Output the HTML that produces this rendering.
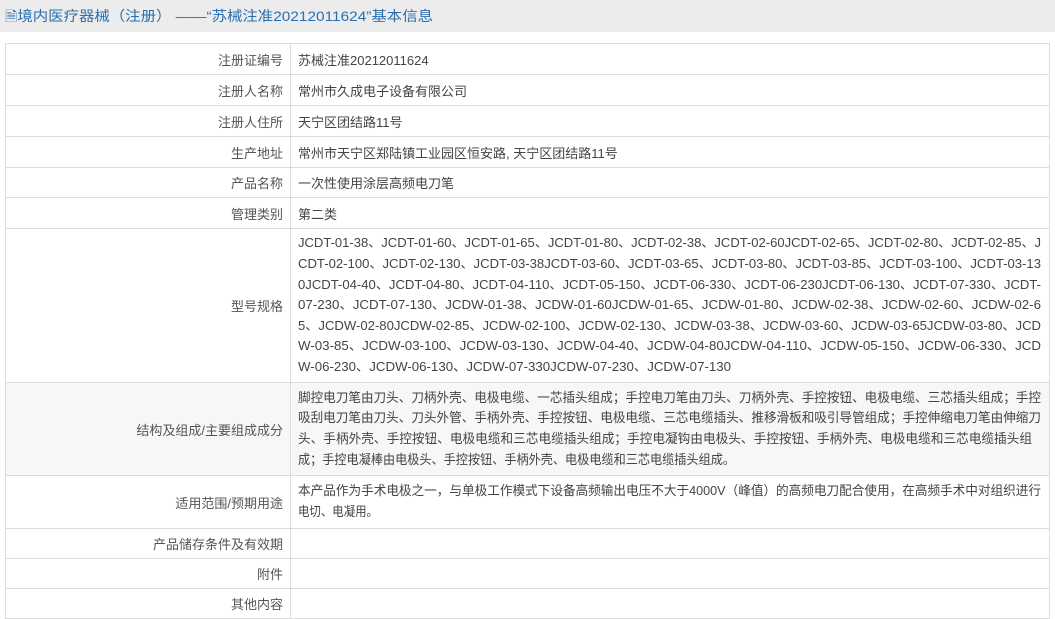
<!DOCTYPE html>
<html><head><meta charset="utf-8">
<style>
body{margin:0;width:1055px;height:618px;overflow:hidden;background:#fff;font-family:"Liberation Sans","Noto Sans CJK SC",sans-serif;font-size:13px;color:#333}
.hd{height:32px;background:#ececec;color:#2a6fb0;font-size:14px;line-height:32px;padding-left:5px;white-space:nowrap}
table{position:absolute;left:5px;top:43px;width:1045px;border-collapse:collapse;table-layout:fixed}
td{border:1px solid #dcdcdc;padding:0 7px;vertical-align:middle;color:#444}
td.l{width:270px;text-align:right;color:#555}
.ln{white-space:nowrap;line-height:20.6px;display:block;transform-origin:0 50%}
.gray td{background:#f7f7f7}
</style></head><body>
<div class="hd"><span class="ln" data-w="428" style="line-height:32px">🗎境内医疗器械（注册） ——“苏械注准20212011624”基本信息</span></div>
<table>
<tr style="height:31px"><td class="l">注册证编号</td><td>苏械注准20212011624</td></tr>
<tr style="height:31px"><td class="l">注册人名称</td><td>常州市久成电子设备有限公司</td></tr>
<tr style="height:31px"><td class="l">注册人住所</td><td>天宁区团结路11号</td></tr>
<tr style="height:31px"><td class="l">生产地址</td><td>常州市天宁区郑陆镇工业园区恒安路, 天宁区团结路11号</td></tr>
<tr style="height:30px"><td class="l">产品名称</td><td>一次性使用涂层高频电刀笔</td></tr>
<tr style="height:31px"><td class="l">管理类别</td><td>第二类</td></tr>
<tr style="height:154px"><td class="l">型号规格</td><td class="fit">
<span class="ln">JCDT-01-38、JCDT-01-60、JCDT-01-65、JCDT-01-80、JCDT-02-38、JCDT-02-60JCDT-02-65、JCDT-02-80、JCDT-02-85、J</span>
<span class="ln">CDT-02-100、JCDT-02-130、JCDT-03-38JCDT-03-60、JCDT-03-65、JCDT-03-80、JCDT-03-85、JCDT-03-100、JCDT-03-13</span>
<span class="ln">0JCDT-04-40、JCDT-04-80、JCDT-04-110、JCDT-05-150、JCDT-06-330、JCDT-06-230JCDT-06-130、JCDT-07-330、JCDT-</span>
<span class="ln">07-230、JCDT-07-130、JCDW-01-38、JCDW-01-60JCDW-01-65、JCDW-01-80、JCDW-02-38、JCDW-02-60、JCDW-02-6</span>
<span class="ln">5、JCDW-02-80JCDW-02-85、JCDW-02-100、JCDW-02-130、JCDW-03-38、JCDW-03-60、JCDW-03-65JCDW-03-80、JCD</span>
<span class="ln">W-03-85、JCDW-03-100、JCDW-03-130、JCDW-04-40、JCDW-04-80JCDW-04-110、JCDW-05-150、JCDW-06-330、JCD</span>
<span class="ln" data-w="433">W-06-230、JCDW-06-130、JCDW-07-330JCDW-07-230、JCDW-07-130</span>
</td></tr>
<tr style="height:93px" class="gray"><td class="l">结构及组成/主要组成成分</td><td class="fit">
<span class="ln">脚控电刀笔由刀头、刀柄外壳、电极电缆、一芯插头组成；手控电刀笔由刀头、刀柄外壳、手控按钮、电极电缆、三芯插头组成；手控</span>
<span class="ln">吸刮电刀笔由刀头、刀头外管、手柄外壳、手控按钮、电极电缆、三芯电缆插头、推移滑板和吸引导管组成；手控伸缩电刀笔由伸缩刀</span>
<span class="ln" data-w="734">头、手柄外壳、手控按钮、电极电缆和三芯电缆插头组成；手控电凝钩由电极头、手控按钮、手柄外壳、电极电缆和三芯电缆插头组</span>
<span class="ln" data-w="437">成；手控电凝棒由电极头、手控按钮、手柄外壳、电极电缆和三芯电缆插头组成。</span>
</td></tr>
<tr style="height:53px"><td class="l">适用范围/预期用途</td><td class="fit">
<span class="ln">本产品作为手术电极之一，与单极工作模式下设备高频输出电压不大于4000V（峰值）的高频电刀配合使用，在高频手术中对组织进行</span>
<span class="ln" data-w="80">电切、电凝用。</span>
</td></tr>
<tr style="height:30px"><td class="l">产品储存条件及有效期</td><td></td></tr>
<tr style="height:30px"><td class="l">附件</td><td></td></tr>
<tr style="height:30px"><td class="l">其他内容</td><td></td></tr>
</table>
<script>
document.querySelectorAll('.ln').forEach(function(s){
  var target=parseFloat(s.getAttribute('data-w')||'743');
  s.style.display='inline-block';
  var w=s.getBoundingClientRect().width;
  s.style.display='block';
  if(w>0){s.style.transform='scaleX('+(target/w)+')';}
});
</script>
</body></html>
